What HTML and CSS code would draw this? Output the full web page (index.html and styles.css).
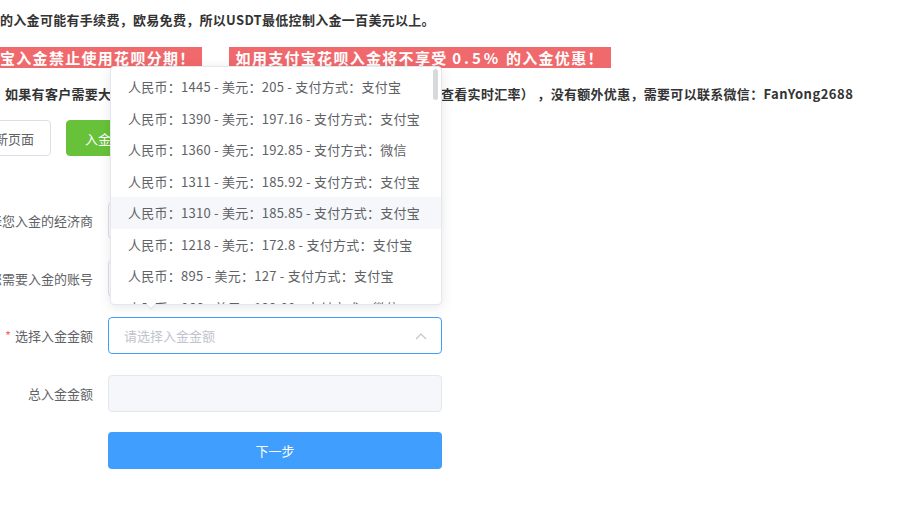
FILE: index.html
```html
<!DOCTYPE html>
<html lang="zh-CN">
<head>
<meta charset="utf-8">
<link rel="stylesheet" href="styles.css">
</head>
<body>
<div class="page">
  <p class="note">的入金可能有手续费，欧易免费，所以USDT最低控制入金一百美元以上。</p>
  <div class="alerts">
    <span class="alert alert-first">宝入金禁止使用花呗分期！</span>
    <span class="alert">如用支付宝花呗入金将不享受 <span class="pct">0.5%</span> 的入金优惠！</span>
  </div>
  <p class="note note-2"><span class="hidden-part">如果有客户需要大额入金，可以按照银行当日的美元汇率计算入金金额（点击此</span>查看实时汇率） ，没有额外优惠，需要可以联系微信：<span class="wx">FanYong2688</span></p>
  <div class="actions">
    <button class="btn btn-plain">刷新页面</button>
    <button class="btn btn-green">入金记录查询</button>
  </div>
  <form class="form">
    <div class="row">
      <label class="label">请选择您入金的经济商</label>
      <div class="field select-like"></div>
    </div>
    <div class="row">
      <label class="label">请填写您需要入金的账号</label>
      <div class="field select-like"></div>
    </div>
    <div class="row">
      <label class="label"><span class="req">*</span>选择入金金额</label>
      <div class="field field-focus">
        <span class="placeholder">请选择入金金额</span>
        <svg class="chevron" width="12" height="8" viewBox="0 0 12 8"><polyline points="1,7 6,2 11,7" fill="none" stroke="#c0c4cc" stroke-width="1.2"/></svg>
      </div>
    </div>
    <div class="row">
      <label class="label">总入金金额</label>
      <div class="field field-disabled"></div>
    </div>
    <div class="row">
      <span class="label"></span>
      <button type="button" class="submit">下一步</button>
    </div>
  </form>

  <div class="dropdown">
    <ul class="options">
      <li>人民币：1445 - 美元：205 - 支付方式：支付宝</li>
      <li>人民币：1390 - 美元：197.16 - 支付方式：支付宝</li>
      <li>人民币：1360 - 美元：192.85 - 支付方式：微信</li>
      <li>人民币：1311 - 美元：185.92 - 支付方式：支付宝</li>
      <li class="hover">人民币：1310 - 美元：185.85 - 支付方式：支付宝</li>
      <li>人民币：1218 - 美元：172.8 - 支付方式：支付宝</li>
      <li>人民币：895 - 美元：127 - 支付方式：支付宝</li>
      <li>人民币：866 - 美元：122.88 - 支付方式：微信</li>
    </ul>
    <span class="thumb"></span>
    <span class="arrow"></span>
  </div>
</div>
</body>
</html>
```

FILE: styles.css
```css
* { box-sizing: border-box; }
html, body { margin: 0; padding: 0; background: #fff; overflow: hidden; }
body {
  font-family: "Noto Sans CJK SC", "Noto Sans", sans-serif;
  color: #606266;
  width: 910px;
  height: 512px;
}
.page { position: relative; height: 512px; }
.note {
  margin: 0;
  padding-top: 11px;
  height: 30px;
  line-height: 18px;
  font-size: 13px;
  font-weight: 700;
  color: #333;
  white-space: nowrap;
  letter-spacing: 0.3px;
}
.note-2 { padding-top: 0; height: auto; margin-top: 17px; padding-left: 5px; }
.hidden-part { display: inline-block; width: 436px; overflow: hidden; vertical-align: top; }
.wx { letter-spacing: 0.5px; }
.alerts {
  display: flex;
  gap: 27px;
  margin-top: 17px;
  height: 21px;
}
.alert {
  display: inline-block;
  height: 21px;
  line-height: 21px;
  padding: 0 7px;
  background: #f0696c;
  color: #fff;
  font-size: 15px;
  font-weight: 700;
  letter-spacing: 1.3px;
  white-space: nowrap;
}
.alert-first { padding-left: 0; padding-right: 6px; }
.pct { letter-spacing: 3px; }
.actions {
  display: flex;
  gap: 15px;
  margin-top: 17px;
  margin-left: -35px;
  height: 36px;
}
.btn {
  height: 36px;
  padding: 0 16px;
  border-radius: 4px;
  font-family: inherit;
  font-size: 13px;
  white-space: nowrap;
}
.btn-plain { background: #fff; border: 1px solid #dcdfe6; color: #606266; }
.btn-green { background: #67c23a; border: 1px solid #67c23a; color: #fff; padding: 0 18px; }
.form {
  margin-top: 46px;
  display: flex;
  flex-direction: column;
  gap: 20.5px;
}
.row { display: flex; align-items: center; gap: 15px; height: 37px; }
.label {
  width: 93px;
  flex: none;
  display: flex;
  justify-content: flex-end;
  white-space: nowrap;
  font-size: 13px;
  color: #606266;
}
.req { color: #f56c6c; margin-right: 4px; }
.field {
  width: 334px;
  height: 37px;
  border: 1px solid #dcdfe6;
  border-radius: 4px;
  display: flex;
  align-items: center;
  justify-content: space-between;
  padding: 0 14px 0 15px;
  background: #fff;
}
.field-focus { border-color: #409eff; }
.field-disabled { background: #f5f7fa; border-color: #e4e7ed; }
.placeholder { font-size: 13px; color: #c0c4cc; }
.submit {
  width: 334px;
  height: 37px;
  border: none;
  border-radius: 4px;
  background: #409eff;
  color: #fff;
  font-family: inherit;
  font-size: 13px;
}
.dropdown {
  position: absolute;
  left: 110px;
  top: 66px;
  width: 332px;
  height: 239px;
  background: #fff;
  border: 1px solid #e4e7ed;
  border-radius: 4px;
  box-shadow: 0 2px 12px rgba(0,0,0,0.1);
}
.options {
  list-style: none;
  margin: 0;
  padding: 4px 0 0;
  height: 237px;
  overflow: hidden;
}
.options li {
  height: 31.5px;
  line-height: 31.5px;
  padding: 0 17px;
  font-size: 13px;
  color: #606266;
  white-space: nowrap;
  letter-spacing: 0.25px;
}
.options li.hover { background: #f5f7fa; }
.thumb {
  position: absolute;
  right: 3px;
  top: 2px;
  width: 5px;
  height: 31px;
  border-radius: 3px;
  background: rgba(144,147,153,0.35);
}
.arrow {
  position: absolute;
  left: 34px;
  bottom: -6px;
  width: 0;
  height: 0;
  border-left: 6px solid transparent;
  border-right: 6px solid transparent;
  border-top: 6px solid #e4e7ed;
}
.arrow::after {
  content: "";
  position: absolute;
  left: -5px;
  top: -7px;
  border-left: 5px solid transparent;
  border-right: 5px solid transparent;
  border-top: 5px solid #fff;
}
```
